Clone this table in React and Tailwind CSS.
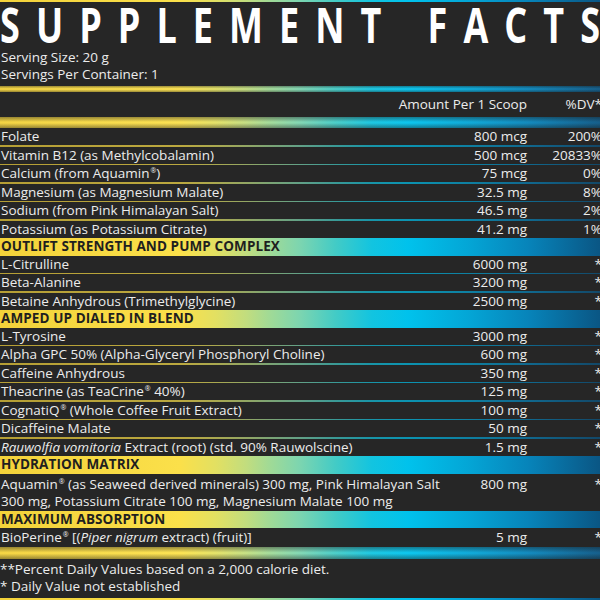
import React from "react";

const GRAD =
  "bg-[linear-gradient(90deg,#f3d23a_0%,#fbe04a_30%,#e2e062_36%,#c2dd7e_41%,#a0da96_45%,#7cd5b0_50%,#42cbc6_56%,#12c4e0_62%,#00c2ec_68%,#04a6d6_78%,#0784ba_88%,#0a5684_100%)]";

const R = () => <sup className="text-[7px] top-[-0.7em] ml-[1px]">®</sup>;

function Row({ name, amt, dv, h = "h-[17px]" }) {
  return (
    <div className={`flex items-center bg-[#262626] ${h} leading-[17px] whitespace-nowrap`}>
      <div className="flex-1 min-w-0 pl-[1px]">{name}</div>
      <div className="shrink-0 text-right">{amt}</div>
      <div className="w-[75px] -mr-[2px] shrink-0 text-right">{dv}</div>
    </div>
  );
}

function Section({ title, h = "h-[18px]" }) {
  return (
    <div className={`${h} shrink-0 flex items-center pl-[1px] font-bold text-[#1f1f1f] text-[13.5px] tracking-[0.1px]`}>
      {title}
    </div>
  );
}

const Sep = () => (
  <div className="bg-[#262626]">
    <div className={`h-[1.5px] ${GRAD} opacity-70`} />
  </div>
);

function Group({ children }) {
  const items = React.Children.toArray(children);
  return (
    <div className="flex flex-col shrink-0">
      {items.map((c, i) => (
        <React.Fragment key={i}>
          {i > 0 && <Sep />}
          {c}
        </React.Fragment>
      ))}
    </div>
  );
}

const Bar = ({ h }) => (
  <div className={`${h} shrink-0 bg-[linear-gradient(180deg,rgba(38,38,38,0.45),rgba(255,255,255,0.05)_45%,rgba(255,255,255,0.05)_55%,rgba(38,38,38,0.45))]`} />
);

export default function App() {
  const title = "SUPPLEMENT".split("");
  const title2 = "FACTS".split("");
  return (
    <div
      className={`w-[600px] h-[600px] overflow-hidden ${GRAD} text-[#ececec] text-[13.5px] font-['Open_Sans',sans-serif] flex flex-col`}
    >
      <div className="h-[2px] shrink-0" />
      <div className="h-[84px] shrink-0 bg-[#262626] flex flex-col">
        <div className="h-[47px] shrink-0 flex items-center justify-between text-white font-bold text-[36px] leading-[30px]">
          {title.map((c, i) => (
            <span key={"a" + i} className="inline-block scale-y-[1.34]">{c}</span>
          ))}
          <span className="w-[14px]" />
          {title2.map((c, i) => (
            <span key={"b" + i} className="inline-block scale-y-[1.34]">{c}</span>
          ))}
        </div>
        <div className="leading-[17px] pl-[1px]">Serving Size: 20 g</div>
        <div className="leading-[17px] pl-[1px]">Servings Per Container: 1</div>
      </div>
      <Bar h="h-[6px]" />
      <div className="h-[25px] shrink-0 bg-[#262626] flex items-center whitespace-nowrap">
        <div className="flex-1" />
        <div className="text-right">Amount Per 1 Scoop</div>
        <div className="w-[75px] -mr-[2px] text-right">%DV*</div>
      </div>
      <Bar h="h-[11px]" />
      <Group>
        <Row name="Folate" amt="800 mcg" dv="200%" />
        <Row name="Vitamin B12 (as Methylcobalamin)" amt="500 mcg" dv="20833%" />
        <Row name={<>Calcium (from Aquamin<R />)</>} amt="75 mcg" dv="0%" />
        <Row name="Magnesium (as Magnesium Malate)" amt="32.5 mg" dv="8%" />
        <Row name="Sodium (from Pink Himalayan Salt)" amt="46.5 mg" dv="2%" />
        <Row name="Potassium (as Potassium Citrate)" amt="41.2 mg" dv="1%" />
      </Group>
      <Section title="OUTLIFT STRENGTH AND PUMP COMPLEX" />
      <Group>
        <Row name="L-Citrulline" amt="6000 mg" dv="*" />
        <Row name="Beta-Alanine" amt="3200 mg" dv="*" />
        <Row name="Betaine Anhydrous (Trimethylglycine)" amt="2500 mg" dv="*" />
      </Group>
      <Section title="AMPED UP DIALED IN BLEND" />
      <Group>
        <Row name="L-Tyrosine" amt="3000 mg" dv="*" />
        <Row name="Alpha GPC 50% (Alpha-Glyceryl Phosphoryl Choline)" amt="600 mg" dv="*" />
        <Row name="Caffeine Anhydrous" amt="350 mg" dv="*" />
        <Row name={<>Theacrine (as TeaCrine<R /> 40%)</>} amt="125 mg" dv="*" />
        <Row name={<>CognatiQ<R /> (Whole Coffee Fruit Extract)</>} amt="100 mg" dv="*" />
        <Row name="Dicaffeine Malate" amt="50 mg" dv="*" />
        <Row
          name={<><i>Rauwolfia vomitoria</i> Extract (root) (std. 90% Rauwolscine)</>}
          amt="1.5 mg"
          dv="*"
        />
      </Group>
      <Section title="HYDRATION MATRIX" />
      <div className="h-[37px] shrink-0 bg-[#262626] flex items-start pt-[2px] leading-[17px] whitespace-nowrap">
        <div className="flex-1 pl-[1px]">
          Aquamin<R /> (as Seaweed derived minerals) 300 mg, Pink Himalayan Salt
          <br />
          300 mg, Potassium Citrate 100 mg, Magnesium Malate 100 mg
        </div>
        <div className="text-right">800 mg</div>
        <div className="w-[75px] -mr-[2px] text-right">*</div>
      </div>
      <Section title="MAXIMUM ABSORPTION" h="h-[17px]" />
      <Row
        h="h-[19px] shrink-0"
        name={<>BioPerine<R /> [(<i>Piper nigrum</i> extract) (fruit)]</>}
        amt="5 mg"
        dv="*"
      />
      <Bar h="h-[12px]" />
      <div className="h-[39px] shrink-0 bg-[#262626] pt-[2px] leading-[17px] whitespace-nowrap">
        <div>**Percent Daily Values based on a 2,000 calorie diet.</div>
        <div>* Daily Value not established</div>
      </div>
      <div className="flex-1" />
    </div>
  );
}
